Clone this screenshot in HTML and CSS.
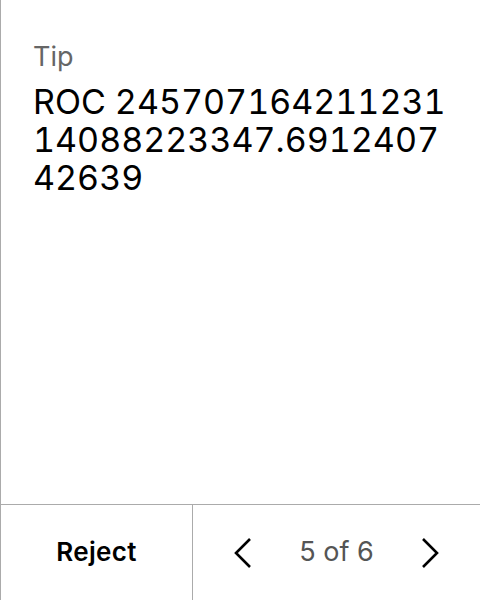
FILE: index.html
```html
<!DOCTYPE html>
<html>
<head>
<meta charset="utf-8">
<link rel="stylesheet" href="styles.css">
</head>
<body>
<div class="panel">
  <div class="content">
    <div class="label">Tip</div>
    <div class="value">ROC 24570716421123114088223347.691240742639</div>
  </div>
  <div class="footer">
    <div class="reject">Reject</div>
    <div class="pager">
      <svg class="chev" width="18" height="32" viewBox="0 0 18 32"><path d="M16 2 L2 16 L16 30" fill="none" stroke="#000" stroke-width="2.6" stroke-linecap="butt" stroke-linejoin="miter"/></svg>
      <span class="count">5 of 6</span>
      <svg class="chev" width="18" height="32" viewBox="0 0 18 32"><path d="M2 2 L16 16 L2 30" fill="none" stroke="#000" stroke-width="2.6" stroke-linecap="butt" stroke-linejoin="miter"/></svg>
    </div>
  </div>
</div>
</body>
</html>
```
FILE: styles.css
```css
html, body {
  margin: 0;
  padding: 0;
  background: #fff;
}
body {
  font-family: Inter, "Noto Sans", sans-serif;
  color: #000;
}
.panel {
  width: 479px;
  height: 600px;
  border-left: 1px solid #ababab;
  display: flex;
  flex-direction: column;
}
.content {
  flex: 1;
  padding: 39px 32px 0 32px;
}
.label {
  font-size: 27px;
  line-height: 36px;
  color: #666;
}
.value {
  font-size: 34px;
  line-height: 38px;
  margin-top: 8px;
  word-break: break-all;
  font-variant-numeric: tabular-nums;
}
.footer {
  height: 95px;
  border-top: 1px solid #ababab;
  display: flex;
}
.reject {
  width: 192px;
  flex-shrink: 0;
  border-right: 1px solid #ababab;
  display: flex;
  align-items: center;
  justify-content: center;
  padding-bottom: 3px;
  box-sizing: border-box;
  font-size: 26px;
  letter-spacing: 0.3px;
  font-weight: 600;
}
.pager {
  flex: 1;
  display: flex;
  align-items: center;
  justify-content: center;
  gap: 47px;
}
.count {
  font-size: 27px;
  color: #555;
  padding-bottom: 3px;
}
.chev {
  display: block;
}
```
